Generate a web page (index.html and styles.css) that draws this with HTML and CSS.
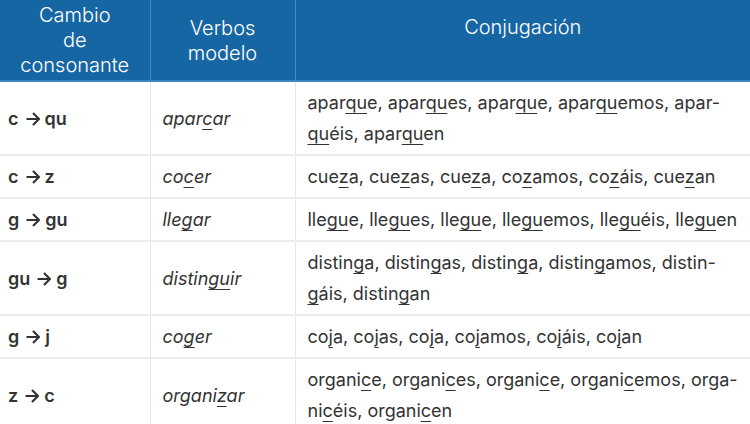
FILE: index.html
```html
<!DOCTYPE html>
<html lang="es">
<head>
<meta charset="utf-8">
<link rel="stylesheet" href="styles.css">
</head>
<body>
<table class="conj">
  <colgroup>
    <col class="w1">
    <col class="w2">
    <col class="w3">
  </colgroup>
  <thead>
    <tr>
      <th>Cambio<br>de<br>consonante</th>
      <th>Verbos<br>modelo</th>
      <th class="top">Conjugación</th>
    </tr>
  </thead>
  <tbody>
    <tr>
      <td class="rule">c<svg class="arr" viewBox="0 0 14 14" aria-label="→"><path d="M0.5 7H13M7 1L13 7L7 13"/></svg>qu</td>
      <td class="verb">apar<u>c</u>ar</td>
      <td>apar<u>qu</u>e, apar<u>qu</u>es, apar<u>qu</u>e, apar<u>qu</u>emos, apar-<br><u>qu</u>éis, apar<u>qu</u>en</td>
    </tr>
    <tr>
      <td class="rule">c<svg class="arr" viewBox="0 0 14 14" aria-label="→"><path d="M0.5 7H13M7 1L13 7L7 13"/></svg>z</td>
      <td class="verb">co<u>c</u>er</td>
      <td>cue<u>z</u>a, cue<u>z</u>as, cue<u>z</u>a, co<u>z</u>amos, co<u>z</u>áis, cue<u>z</u>an</td>
    </tr>
    <tr>
      <td class="rule">g<svg class="arr" viewBox="0 0 14 14" aria-label="→"><path d="M0.5 7H13M7 1L13 7L7 13"/></svg>gu</td>
      <td class="verb">lle<u>g</u>ar</td>
      <td>lle<u>gu</u>e, lle<u>gu</u>es, lle<u>gu</u>e, lle<u>gu</u>emos, lle<u>gu</u>éis, lle<u>gu</u>en</td>
    </tr>
    <tr>
      <td class="rule">gu<svg class="arr" viewBox="0 0 14 14" aria-label="→"><path d="M0.5 7H13M7 1L13 7L7 13"/></svg>g</td>
      <td class="verb">distin<u>gu</u>ir</td>
      <td>distin<u>g</u>a, distin<u>g</u>as, distin<u>g</u>a, distin<u>g</u>amos, distin-<br><u>g</u>áis, distin<u>g</u>an</td>
    </tr>
    <tr>
      <td class="rule">g<svg class="arr" viewBox="0 0 14 14" aria-label="→"><path d="M0.5 7H13M7 1L13 7L7 13"/></svg>j</td>
      <td class="verb">co<u>g</u>er</td>
      <td>co<u>j</u>a, co<u>j</u>as, co<u>j</u>a, co<u>j</u>amos, co<u>j</u>áis, co<u>j</u>an</td>
    </tr>
    <tr>
      <td class="rule">z<svg class="arr" viewBox="0 0 14 14" aria-label="→"><path d="M0.5 7H13M7 1L13 7L7 13"/></svg>c</td>
      <td class="verb">organi<u>z</u>ar</td>
      <td>organi<u>c</u>e, organi<u>c</u>es, organi<u>c</u>e, organi<u>c</u>emos, orga-<br>ni<u>c</u>éis, organi<u>c</u>en</td>
    </tr>
  </tbody>
</table>
</body>
</html>
```
FILE: styles.css
```css
html, body {
  margin: 0;
  padding: 0;
  background: #ffffff;
}
body {
  font-family: Inter, "Liberation Sans", sans-serif;
  color: #333333;
  overflow: hidden;
}
.conj {
  border-collapse: collapse;
  width: 750px;
  table-layout: fixed;
}
.w1 { width: 150px; }
.w2 { width: 145px; }
.w3 { width: 455px; }
.conj th {
  background: #1766a4;
  color: #ffffff;
  font-weight: 300;
  font-size: 20px;
  line-height: 25px;
  text-align: center;
  vertical-align: middle;
  padding: 3px 4px 2px;
  border-left: 1px solid #4b87bb;
  border-bottom: 2px solid #3a86c6;
}
.conj th:first-child {
  border-left: none;
}
.conj th.top {
  vertical-align: top;
  padding-top: 15px;
}
.conj td {
  font-size: 18px;
  line-height: 31px;
  padding: 5px 12px 5px;
  vertical-align: middle;
  border-left: 1px solid #e6e6e6;
  border-bottom: 2px solid #ececec;
}
.conj td:first-child {
  border-left: none;
  padding-left: 8px;
}
.rule {
  font-weight: 600;
}
.arr {
  display: inline-block;
  width: 14px;
  height: 14px;
  margin: 0 5px 0 7px;
  vertical-align: -1px;
  fill: none;
  stroke: #333333;
  stroke-width: 2.2;
  stroke-linecap: butt;
  stroke-linejoin: miter;
}
.verb {
  font-style: italic;
}
u {
  text-decoration: underline;
  text-decoration-thickness: 1px;
  text-underline-offset: 4px;
  text-decoration-skip-ink: none;
}
```
